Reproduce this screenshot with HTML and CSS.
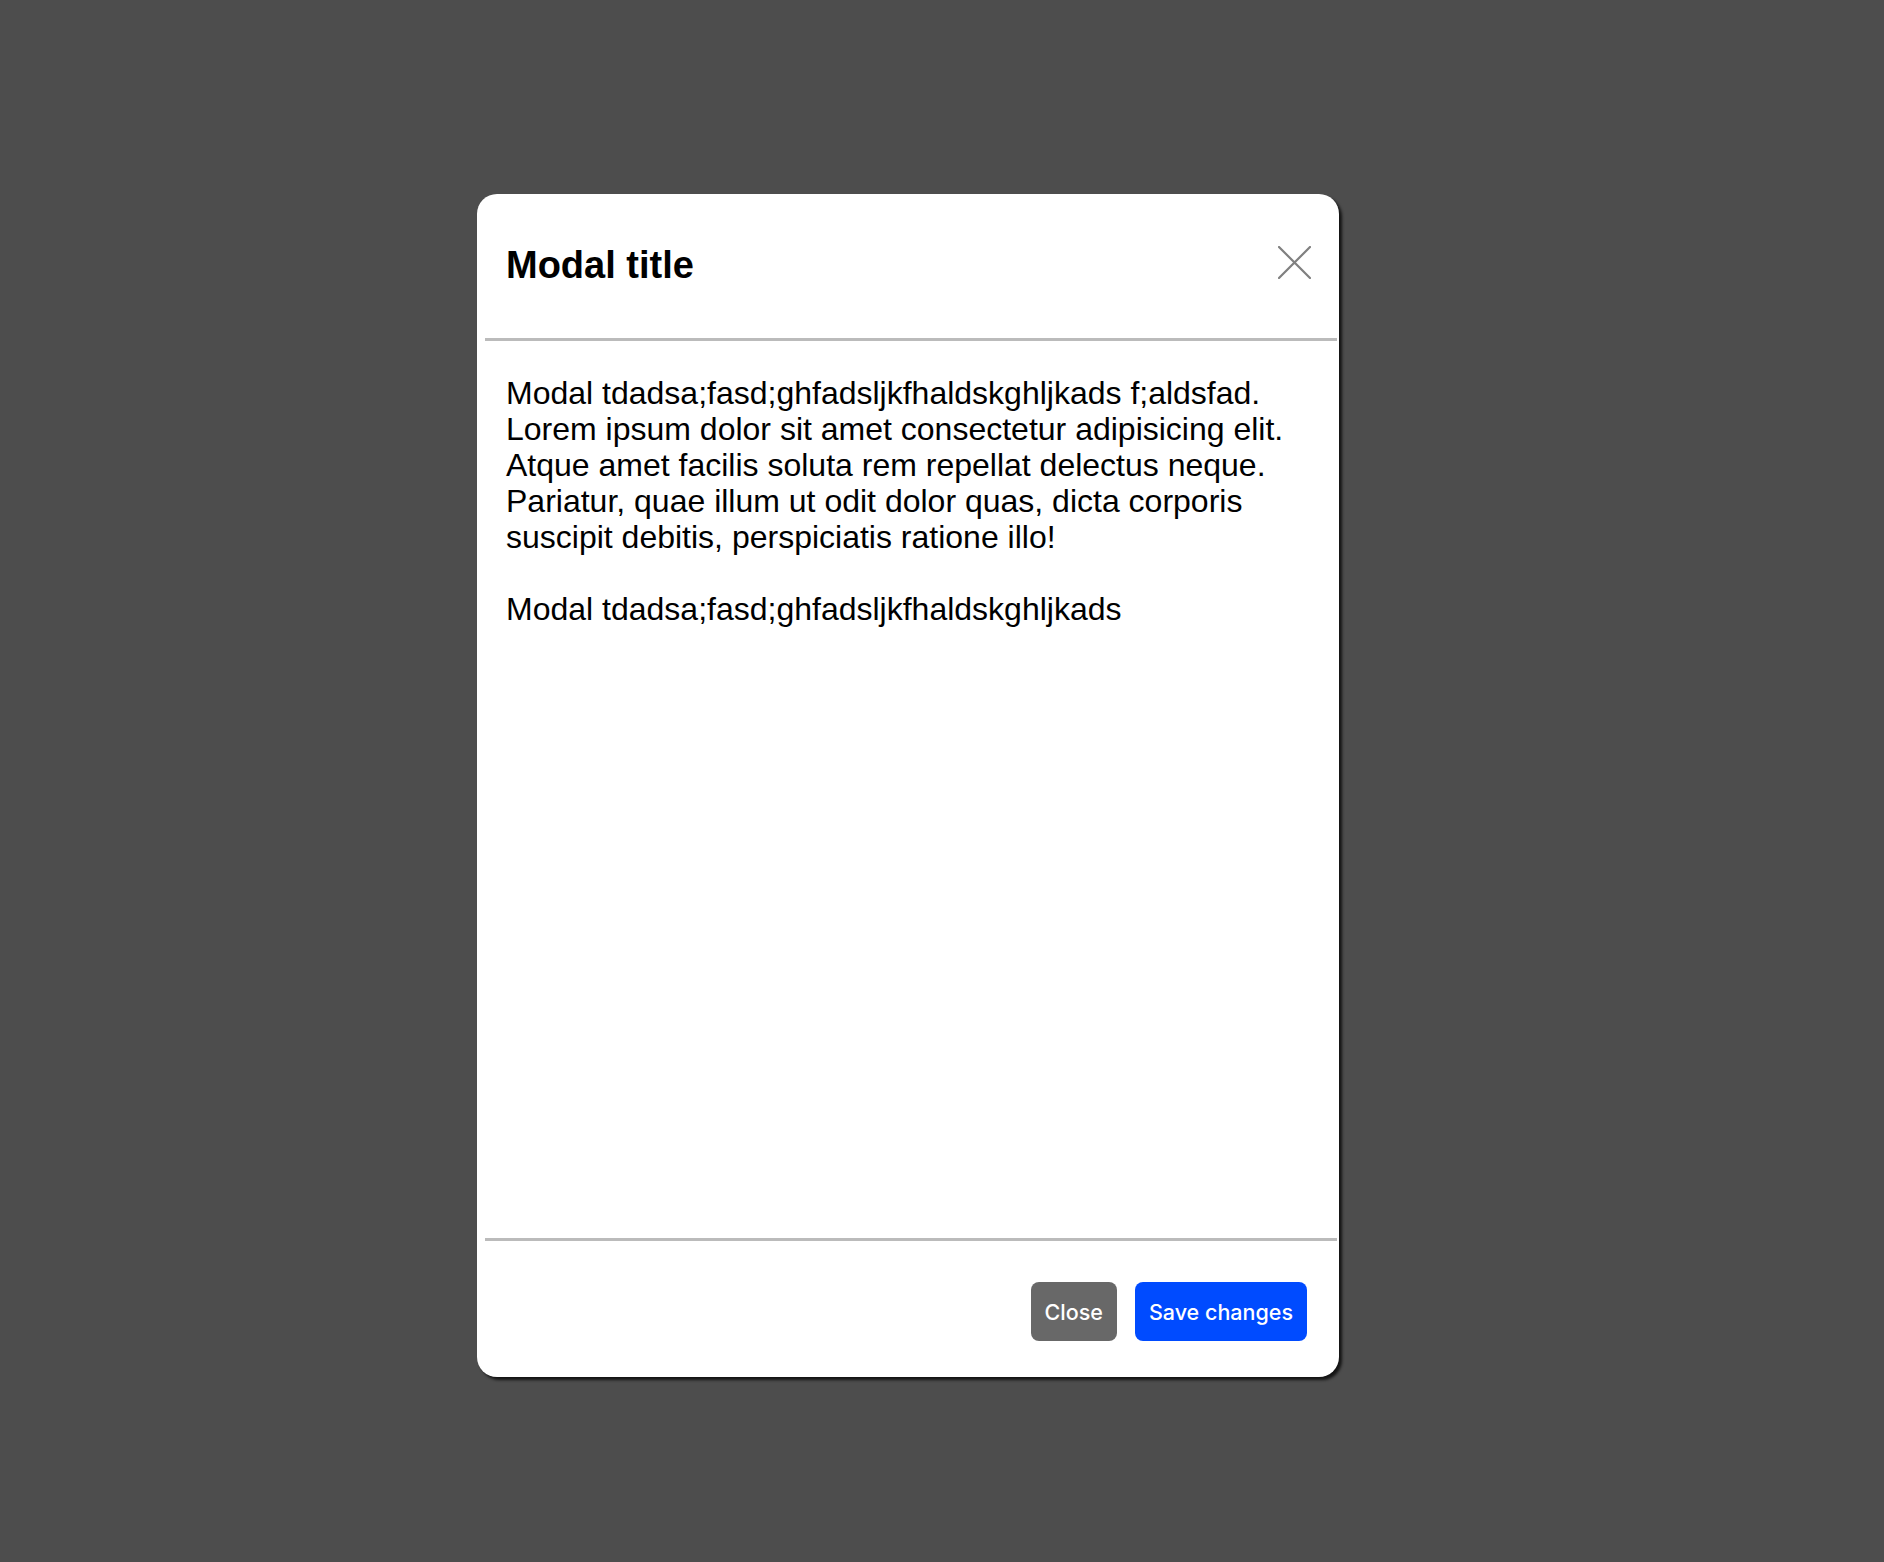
FILE: index.html
```html
<!DOCTYPE html>
<html lang="en">
<head>
<meta charset="utf-8">
<title>Modal</title>
<link rel="stylesheet" href="styles.css">
</head>
<body>
<div class="backdrop">
  <div class="modal">
    <div class="modal-header">
      <h5 class="modal-title">Modal title</h5>
      <button class="btn-close" aria-label="Close">
        <svg width="33" height="33" viewBox="0 0 33 33"><path d="M1 1 L32 32 M32 1 L1 32" stroke="#808080" stroke-width="2.2" fill="none" stroke-linecap="round"/></svg>
      </button>
    </div>
    <div class="divider"></div>
    <div class="modal-body">
      <p class="para">Modal tdadsa;fasd;ghfadsljkfhaldskghljkads f;aldsfad. Lorem ipsum dolor sit amet consectetur adipisicing elit. Atque amet facilis soluta rem repellat delectus neque. Pariatur, quae illum ut odit dolor quas, dicta corporis suscipit debitis, perspiciatis ratione illo!</p>
      <p class="para">Modal tdadsa;fasd;ghfadsljkfhaldskghljkads</p>
    </div>
    <div class="divider"></div>
    <div class="modal-footer">
      <button class="btn btn-secondary">Close</button>
      <button class="btn btn-primary">Save changes</button>
    </div>
  </div>
</div>
</body>
</html>
```

FILE: styles.css
```css
html, body {
  margin: 0;
  padding: 0;
  background: #4d4d4d;
}

.backdrop {
  min-height: 1562px;
  box-sizing: border-box;
  padding: 194px 0 0 477px;
}

.modal {
  width: 862px;
  height: 1183px;
  background: #ffffff;
  border-radius: 20px;
  box-shadow: 3px 3px 3px rgba(0, 0, 0, 0.75);
  display: flex;
  flex-direction: column;
  font-family: "Liberation Sans", Arial, Helvetica, sans-serif;
  color: #000;
}

.modal-header {
  display: flex;
  align-items: center;
  justify-content: space-between;
  padding: 49px 28px 51px 29px;
}

.modal-title {
  margin: 0;
  font-size: 38px;
  line-height: 44px;
  font-weight: 700;
}

.btn-close {
  border: 0;
  background: transparent;
  padding: 0;
  width: 33px;
  height: 33px;
  margin-bottom: 6px;
  display: flex;
}

.divider {
  height: 3px;
  background: #bbbbbb;
  margin: 0 2px 0 8px;
}

.modal-body {
  flex: 1;
  padding: 34px 29px 0 29px;
}

.para {
  margin: 0 0 36px 0;
  font-size: 32px;
  line-height: 36px;
}

.modal-footer {
  display: flex;
  justify-content: flex-end;
  gap: 18px;
  padding: 41px 32px 36px 0;
}

.btn {
  height: 59px;
  border: 0;
  border-radius: 8px;
  padding: 0 14px;
  font-family: Inter, "Noto Sans", sans-serif;
  font-size: 21.5px;
  font-weight: 500;
  color: #ffffff;
}

.btn-secondary {
  background: #686868;
}

.btn-primary {
  background: #004bff;
}
```
